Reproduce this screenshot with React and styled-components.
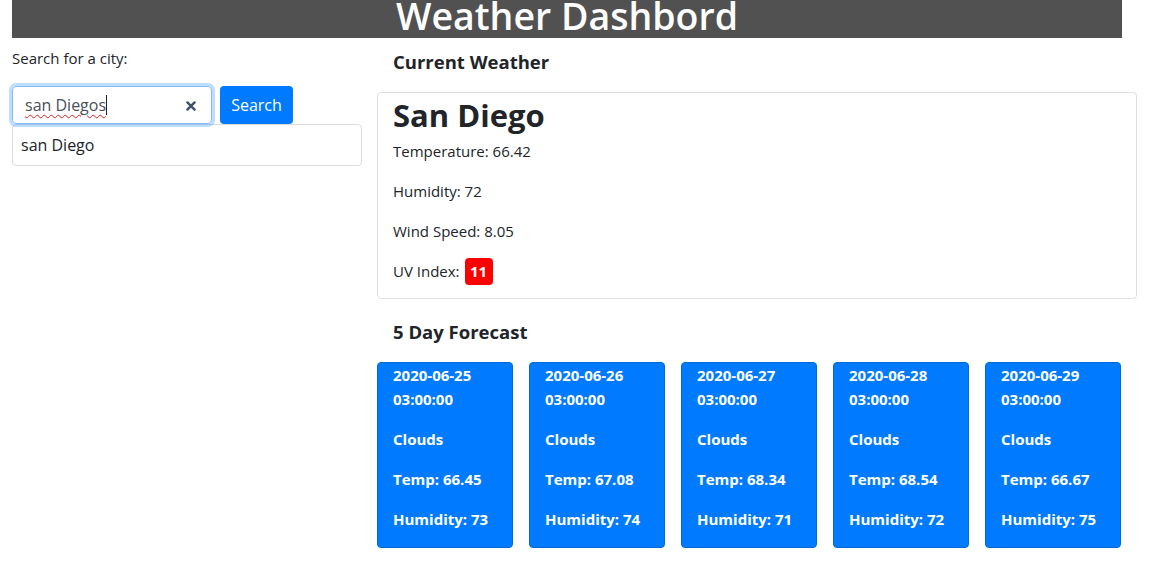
import React from 'react'
import styled, { createGlobalStyle } from 'styled-components'

const GlobalStyle = createGlobalStyle`
  body {
    margin: 0;
    font-family: "Open Sans", "Noto Sans", sans-serif;
    font-size: 15px;
    color: #212529;
    background: #ffffff;
  }
  * { box-sizing: border-box; }
`

const forecast = [
  { date: '2020-06-25', temp: '66.45', humidity: 73 },
  { date: '2020-06-26', temp: '67.08', humidity: 74 },
  { date: '2020-06-27', temp: '68.34', humidity: 71 },
  { date: '2020-06-28', temp: '68.54', humidity: 72 },
  { date: '2020-06-29', temp: '66.67', humidity: 75 },
]

export default function App() {
  return (
    <>
      <GlobalStyle />
      <Header>
        <HeaderTitle>Weather Dashbord</HeaderTitle>
      </Header>
      <Main>
        <SideColumn>
          <SearchLabel>Search for a city:</SearchLabel>
          <SearchRow>
            <InputBox>
              <InputText>san Diegos</InputText>
              <Caret />
              <ClearIcon viewBox="0 0 10 10">
                <path d="M2 2 L8 8 M8 2 L2 8" stroke="#3e4f6a" strokeWidth="2" strokeLinecap="round" />
              </ClearIcon>
            </InputBox>
            <SearchButton>Search</SearchButton>
          </SearchRow>
          <Suggestion>san Diego</Suggestion>
        </SideColumn>
        <ContentColumn>
          <SectionTitle>Current Weather</SectionTitle>
          <CurrentCard>
            <CityName>San Diego</CityName>
            <Stat>Temperature: 66.42</Stat>
            <Stat>Humidity: 72</Stat>
            <Stat>Wind Speed: 8.05</Stat>
            <Stat>UV Index: <UvBadge>11</UvBadge></Stat>
          </CurrentCard>
          <SectionTitle $forecast>5 Day Forecast</SectionTitle>
          <ForecastRow>
            {forecast.map((day) => (
              <ForecastCard key={day.date}>
                <ForecastLine>{day.date}<br />03:00:00</ForecastLine>
                <ForecastLine>Clouds</ForecastLine>
                <ForecastLine>Temp: {day.temp}</ForecastLine>
                <ForecastLine>Humidity: {day.humidity}</ForecastLine>
              </ForecastCard>
            ))}
          </ForecastRow>
        </ContentColumn>
      </Main>
    </>
  )
}

const Header = styled.header`
  margin-left: 12px;
  width: 1110px;
  height: 38px;
  background: #515151;
  overflow: hidden;
  display: flex;
  justify-content: center;
`

const HeaderTitle = styled.h1`
  margin: 0;
  margin-top: -8px;
  font-size: 37.5px;
  line-height: 48px;
  font-weight: 600;
  color: #ffffff;
`

const Main = styled.div`
  display: flex;
  padding-left: 12px;
`

const SideColumn = styled.div`
  width: 365px;
  padding-top: 9px;
`

const SearchLabel = styled.div`
  font-size: 15px;
  line-height: 22px;
  margin-bottom: 17px;
`

const SearchRow = styled.div`
  display: flex;
  gap: 8px;
`

const InputBox = styled.div`
  position: relative;
  width: 200px;
  height: 38px;
  border: 1px solid #80bdff;
  border-radius: 4px;
  box-shadow: 0 0 0 3px rgba(0, 123, 255, 0.25);
  display: flex;
  align-items: center;
  padding-left: 12px;
`

const InputText = styled.span`
  font-size: 16px;
  color: #495057;
  text-decoration: underline wavy #e02020;
  text-decoration-thickness: 1px;
  text-underline-offset: 3px;
`

const Caret = styled.span`
  width: 1px;
  height: 20px;
  background: #222;
`

const ClearIcon = styled.svg`
  position: absolute;
  right: 14px;
  top: 13px;
  width: 12px;
  height: 12px;
`

const SearchButton = styled.button`
  width: 73px;
  height: 38px;
  border: none;
  border-radius: 4px;
  background: #007bff;
  color: #ffffff;
  font-family: inherit;
  font-size: 16px;
  padding: 0;
`

const Suggestion = styled.div`
  width: 350px;
  height: 42px;
  border: 1px solid #dcdcdc;
  border-radius: 4px;
  padding: 0 8px;
  font-size: 16px;
  line-height: 40px;
`

const ContentColumn = styled.div`
  width: 760px;
`

const SectionTitle = styled.h5`
  margin: 0;
  padding-left: 16px;
  padding-top: ${(p) => (p.$forecast ? '21px' : '12px')};
  padding-bottom: ${(p) => (p.$forecast ? '18px' : '18px')};
  font-size: 18.5px;
  line-height: 24px;
  font-weight: 700;
`

const CurrentCard = styled.div`
  border: 1px solid #dfdfdf;
  border-radius: 4px;
  padding: 2px 15px 0;
  height: 207px;
`

const CityName = styled.h2`
  margin: 0 0 4px;
  font-size: 31px;
  line-height: 40px;
  font-weight: 700;
`

const Stat = styled.p`
  margin: 0 0 16px;
  font-size: 15px;
  line-height: 24px;
  display: flex;
  align-items: center;
  height: 24px;
`

const UvBadge = styled.span`
  display: inline-flex;
  align-items: center;
  justify-content: center;
  margin-left: 5px;
  width: 28px;
  height: 27px;
  border-radius: 4px;
  background: #ff0000;
  color: #ffffff;
  font-weight: 700;
  font-size: 15px;
`

const ForecastRow = styled.div`
  display: flex;
  gap: 16px;
`

const ForecastCard = styled.div`
  width: 136px;
  height: 186px;
  background: #007bff;
  border: 1px solid #0069d9;
  border-radius: 4px;
  padding: 0 15px;
  color: #ffffff;
`

const ForecastLine = styled.p`
  margin: 0 0 16px;
  font-size: 15px;
  line-height: 24px;
  font-weight: 700;
`
